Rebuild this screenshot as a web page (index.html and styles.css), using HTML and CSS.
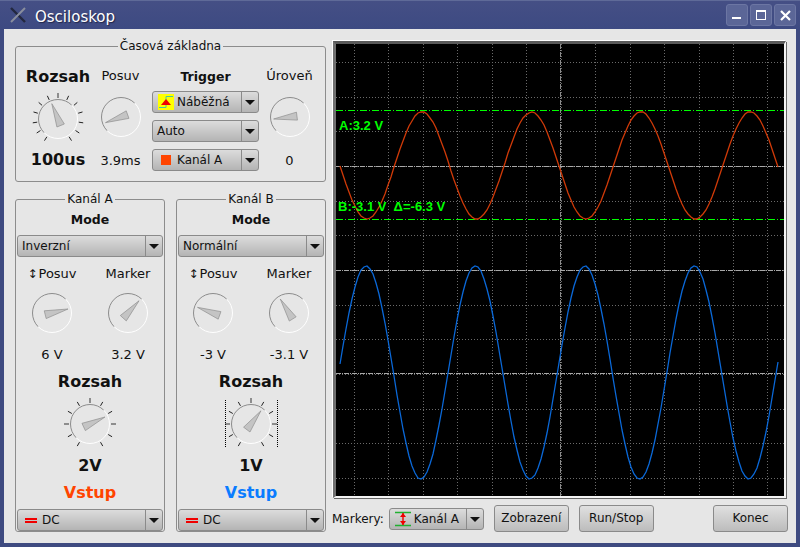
FILE: index.html
```html
<!DOCTYPE html>
<html lang="cs">
<head>
    <meta charset="UTF-8">
    <title>Osciloskop</title>
    <link rel="stylesheet" href="styles.css">
</head>
<body>
    <div class="window">
        <div class="titlebar">
            <svg class="app-icon" width="16" height="16" viewBox="0 0 16 16">
                <path d="M1 1 L15 15" stroke="#23283f" stroke-width="2.4"/>
                <path d="M15 1 L1 15" stroke="#8a8e9e" stroke-width="2"/>
            </svg>
            <span class="title">Osciloskop</span>
            <div class="win-buttons">
                <div class="win-btn">
                    <svg width="10" height="10" viewBox="0 0 10 10"><rect x="0" y="7" width="9" height="2" fill="#fff"/></svg>
                </div>
                <div class="win-btn">
                    <svg width="10" height="10" viewBox="0 0 10 10"><rect x="0.5" y="0.5" width="9" height="9" fill="none" stroke="#fff"/><rect x="0" y="0" width="10" height="2" fill="#fff"/></svg>
                </div>
                <div class="win-btn">
                    <svg width="11" height="11" viewBox="0 0 11 11"><path d="M1 1 L10 10 M10 1 L1 10" stroke="#fff" stroke-width="2.2"/></svg>
                </div>
            </div>
        </div>

        <div class="content">
            <div class="controls">
                <fieldset class="group timebase">
                    <legend>Časová základna</legend>
                    <div class="timebase-grid">
                        <div class="col">
                            <div class="big">Rozsah</div>
                            <svg class="knob" data-angle="-22" data-ticks="13" data-span="148" data-major="6"></svg>
                            <div class="big">100us</div>
                        </div>
                        <div class="col col-small">
                            <div class="label">Posuv</div>
                            <svg class="knob" data-angle="-110"></svg>
                            <div class="label">3.9ms</div>
                        </div>
                        <div class="col trigger">
                            <div class="head">Trigger</div>
                            <div class="combo">
                                <svg class="combo-icon" width="16" height="16" viewBox="0 0 16 16">
                                    <rect width="16" height="16" fill="#ffff00"/>
                                    <path d="M1 13.5 H8 V2.5 H15" fill="none" stroke="#44c8a0" stroke-width="1"/>
                                    <path d="M8 5 L13 11 H3 Z" fill="#f00000"/>
                                </svg>
                                <span class="combo-text">Náběžná</span>
                                <span class="combo-arrow"></span>
                            </div>
                            <div class="combo">
                                <span class="combo-text">Auto</span>
                                <span class="combo-arrow"></span>
                            </div>
                            <div class="combo">
                                <span class="swatch"></span>
                                <span class="combo-text">Kanál A</span>
                                <span class="combo-arrow"></span>
                            </div>
                        </div>
                        <div class="col col-small">
                            <div class="label">Úroveň</div>
                            <svg class="knob" data-angle="-97"></svg>
                            <div class="label">0</div>
                        </div>
                    </div>
                </fieldset>

                <div class="channels">
                    <fieldset class="group channel">
                        <legend>Kanál A</legend>
                        <div class="head mode">Mode</div>
                        <div class="combo combo-wide">
                            <span class="combo-text">Inverzní</span>
                            <span class="combo-arrow"></span>
                        </div>
                        <div class="pair pair-labels">
                            <div class="label"><span class="updown">↕</span>Posuv</div>
                            <div class="label">Marker</div>
                        </div>
                        <div class="pair pair-knobs">
                            <svg class="knob" data-angle="76"></svg>
                            <svg class="knob" data-angle="42"></svg>
                        </div>
                        <div class="pair pair-values">
                            <div class="label">6 V</div>
                            <div class="label">3.2 V</div>
                        </div>
                        <div class="big range">Rozsah</div>
                        <svg class="knob range-knob" data-angle="65" data-ticks="11" data-span="150" data-major="2,5,8"></svg>
                        <div class="big range-value">2V</div>
                        <div class="big vstup vstup-a">Vstup</div>
                        <div class="combo combo-wide combo-input">
                            <span class="dc-icon"></span>
                            <span class="combo-text">DC</span>
                            <span class="combo-arrow"></span>
                        </div>
                    </fieldset>

                    <fieldset class="group channel">
                        <legend>Kanál B</legend>
                        <div class="head mode">Mode</div>
                        <div class="combo combo-wide">
                            <span class="combo-text">Normální</span>
                            <span class="combo-arrow"></span>
                        </div>
                        <div class="pair pair-labels">
                            <div class="label"><span class="updown">↕</span>Posuv</div>
                            <div class="label">Marker</div>
                        </div>
                        <div class="pair pair-knobs">
                            <svg class="knob" data-angle="-70"></svg>
                            <svg class="knob" data-angle="-32"></svg>
                        </div>
                        <div class="pair pair-values">
                            <div class="label">-3 V</div>
                            <div class="label">-3.1 V</div>
                        </div>
                        <div class="big range">Rozsah</div>
                        <svg class="knob range-knob" data-angle="37" data-ticks="11" data-span="150" data-major="2,5,8" data-focus="1"></svg>
                        <div class="big range-value">1V</div>
                        <div class="big vstup vstup-b">Vstup</div>
                        <div class="combo combo-wide combo-input">
                            <span class="dc-icon"></span>
                            <span class="combo-text">DC</span>
                            <span class="combo-arrow"></span>
                        </div>
                    </fieldset>
                </div>
            </div>

            <div class="display">
                <div class="scope">
                    <svg id="plot" width="448" height="452" viewBox="0 0 448 452"></svg>
                    <span class="readout readout-a">A:3.2 V</span>
                    <span class="readout readout-b">B:-3.1 V  Δ=-6.3 V</span>
                </div>
                <div class="toolbar">
                    <span class="toolbar-label">Markery:</span>
                    <div class="combo combo-markers">
                        <svg class="combo-icon" width="16" height="16" viewBox="0 0 16 16">
                            <path d="M0 1.5 H16 M0 14.5 H16" stroke="#20b030" stroke-width="1.4"/>
                            <path d="M8 2 V14" stroke="#f00000" stroke-width="1.4"/>
                            <path d="M8 2 L11 6 H5 Z M8 14 L11 10 H5 Z" fill="#f00000"/>
                        </svg>
                        <span class="combo-text">Kanál A</span>
                        <span class="combo-arrow"></span>
                    </div>
                    <div class="btn">Zobrazení</div>
                    <div class="btn">Run/Stop</div>
                    <div class="btn btn-end">Konec</div>
                </div>
            </div>
        </div>
    </div>

    <script src="app.js"></script>
</body>
</html>
```

FILE: styles.css
```css
* {
    box-sizing: border-box;
}

body {
    margin: 0;
    font-family: "DejaVu Sans", sans-serif;
    font-size: 13px;
    color: #111;
    overflow: hidden;
}

.window {
    width: 800px;
    height: 547px;
    display: flex;
    flex-direction: column;
    background: #3e4a80;
    padding: 0 4px 4px;
    border-top: 1px solid #5f6a98;
}

.titlebar {
    height: 28px;
    display: flex;
    align-items: center;
    background: linear-gradient(#454f85, #3d4a82);
    margin: 0 -4px;
    padding: 0 4px 0 10px;
}

.app-icon {
    flex: none;
}

.title {
    margin: 4px 0 0 9px;
    color: #fff;
    font-size: 15px;
    text-shadow: 1px 1px 1px #20264a;
}

.win-buttons {
    margin-left: auto;
    display: flex;
    gap: 2px;
}

.win-btn {
    width: 22px;
    height: 22px;
    display: flex;
    align-items: center;
    justify-content: center;
    background: #5b6697;
    border: 1px solid #6c76a3;
    border-radius: 3px;
}

.content {
    flex: 1;
    display: flex;
    background: #e6e6e6;
    padding: 11px 8px 0 11px;
    gap: 6px;
}

.controls {
    width: 311px;
    display: flex;
    flex-direction: column;
    margin-top: -1px;
}

.group {
    margin: 0;
    padding: 0;
    border: 1px solid #8c8c8c;
    border-radius: 3px;
    min-width: 0;
}

.group legend {
    margin: 0 auto;
    padding: 0 2px;
    font-size: 12px;
    line-height: 14px;
}

.timebase {
    height: 143px;
}

.timebase-grid {
    display: grid;
    grid-template-columns: 84px 41px 118px 61px;
    padding-top: 12px;
}

.col {
    display: flex;
    flex-direction: column;
    align-items: center;
}

.col .big,
.col .label,
.col .head {
    height: 24px;
    line-height: 24px;
}

.col .knob {
    margin-bottom: -1px;
}

.col-small .label:first-child {
    height: 23px;
    line-height: 22px;
}

.col-small .knob {
    margin-top: -1px;
    margin-bottom: 2px;
}

.trigger {
    margin-left: 11px;
    width: 107px;
}

.trigger .combo {
    margin-bottom: 7px;
}

.trigger .head {
    margin-bottom: 2px;
}

.big {
    font-size: 16px;
    font-weight: bold;
    text-align: center;
    white-space: nowrap;
}

.label {
    text-align: center;
    white-space: nowrap;
}

.head {
    font-weight: bold;
    font-size: 12.5px;
    text-align: center;
}

.knob {
    width: 60px;
    height: 60px;
    flex: none;
    display: block;
}

.combo {
    height: 22px;
    display: flex;
    align-items: center;
    width: 107px;
    flex: none;
    font-size: 12px;
    background: linear-gradient(#dcdcdc, #b4b4b4);
    border: 1px solid #8a8a8a;
    border-radius: 3px;
    padding-left: 4px;
}

.combo-text {
    flex: 1;
    white-space: nowrap;
}

.combo-arrow {
    width: 17px;
    height: 100%;
    flex: none;
    border-left: 1px solid #8a8a8a;
    position: relative;
}

.combo-arrow::after {
    content: "";
    position: absolute;
    left: 3px;
    top: 8px;
    border-style: solid;
    border-width: 5px 5px 0;
    border-color: #111 transparent transparent;
}

.combo-icon {
    flex: none;
    margin: 0 3px 0 1px;
}

.swatch {
    width: 10px;
    height: 10px;
    flex: none;
    margin: 0 6px 0 4px;
    background: #ff4400;
}

.channels {
    display: flex;
    gap: 11px;
    margin-top: 10px;
}

.channel {
    width: 150px;
    height: 340px;
    display: block;
}

.mode {
    margin-top: 4px;
    line-height: 20px;
}

.combo-wide {
    width: 146px;
    margin: 5px 0 0 1px;
}

.pair {
    display: grid;
    grid-template-columns: 72px 72px;
    column-gap: 4px;
    justify-items: center;
}

.pair-labels {
    margin-top: 7px;
    line-height: 20px;
}

.pair-knobs {
    margin-top: -1px;
}

.pair-values {
    margin-top: 2px;
    line-height: 20px;
}

.updown {
    margin-right: 1px;
    font-size: 12px;
}

.range {
    margin-top: 7px;
    line-height: 20px;
}

.range-knob {
    margin: 2px auto 0;
}

.range-value {
    margin-top: 2px;
    line-height: 20px;
}

.vstup {
    margin-top: 7px;
    line-height: 20px;
}

.vstup-a {
    color: #ff4400;
}

.vstup-b {
    color: #0a7cff;
}

.combo-input {
    margin-top: 6px;
}

.dc-icon {
    width: 12px;
    height: 5px;
    flex: none;
    margin: 0 5px 0 3px;
    border-top: 2px solid #f00000;
    border-bottom: 2px solid #f00000;
}

.display {
    width: 456px;
    display: flex;
    flex-direction: column;
}

.scope {
    width: 453px;
    height: 457px;
    margin: 1px 1px 1px 1px;
    position: relative;
    background: #000;
    border-style: solid;
    border-width: 3px 2px 2px 3px;
    border-color: #5a5a5a #f4f4f4 #f4f4f4 #707070;
    box-shadow: -1px -1px 0 #fff, 1px 1px 0 #666;
}

#plot {
    display: block;
}

.readout {
    position: absolute;
    color: #00ff00;
    font-family: "Liberation Sans", sans-serif;
    font-weight: bold;
    font-size: 13px;
    line-height: 14px;
    white-space: pre;
}

.readout-a {
    left: 3px;
    top: 75px;
}

.readout-b {
    left: 2px;
    top: 156px;
}

.toolbar {
    display: flex;
    align-items: center;
    margin-top: 6px;
    height: 27px;
    font-size: 12px;
}

.toolbar-label {
    margin-right: 5px;
}

.combo-markers {
    width: 95px;
    margin-right: 10px;
}

.btn {
    width: 75px;
    height: 27px;
    line-height: 25px;
    text-align: center;
    background: linear-gradient(#e0e0e0, #bcbcbc);
    border: 1px solid #8a8a8a;
    border-radius: 3px;
    margin-right: 10px;
}

.btn-end {
    margin-left: auto;
    margin-right: 0;
}
```

FILE: app.js
```js
const SVG_NS = "http://www.w3.org/2000/svg";

function el(parent, tag, attrs) {
    const node = document.createElementNS(SVG_NS, tag);
    for (const [key, value] of Object.entries(attrs)) {
        node.setAttribute(key, value);
    }
    parent.appendChild(node);
    return node;
}

function polar(cx, cy, r, deg) {
    const rad = (deg * Math.PI) / 180;
    return [cx + r * Math.sin(rad), cy - r * Math.cos(rad)];
}

function drawKnob(svg) {
    const c = 30;
    const r = 19.5;
    const angle = Number(svg.dataset.angle);
    svg.setAttribute("viewBox", "0 0 60 60");

    // scale ticks
    const count = Number(svg.dataset.ticks || 0);
    const span = Number(svg.dataset.span || 0);
    const major = (svg.dataset.major || "").split(",").map(Number);
    for (let i = 0; i < count; i++) {
        const deg = -span + (i * 2 * span) / (count - 1);
        const isMajor = major.includes(i);
        const [x1, y1] = polar(c, c, 21, deg);
        const [x2, y2] = polar(c, c, isMajor ? 26 : 25.5, deg);
        el(svg, "line", {
            x1, y1, x2, y2,
            stroke: isMajor ? "#777" : "#222",
            "stroke-width": isMajor ? 1.6 : 1
        });
    }

    // dial, shaded from the top left
    const [ax, ay] = polar(c, c, r, 45);
    const [bx, by] = polar(c, c, r, 225);
    el(svg, "path", { d: `M${bx} ${by} A${r} ${r} 0 0 1 ${ax} ${ay}`, fill: "none", stroke: "#8c8c8c", "stroke-width": 1 });
    el(svg, "path", { d: `M${ax} ${ay} A${r} ${r} 0 0 1 ${bx} ${by}`, fill: "none", stroke: "#fff", "stroke-width": 1 });

    // pointer
    const tip = polar(c, c, 16.5, angle);
    const back = polar(c, c, -7, angle);
    const left = polar(back[0], back[1], 4, angle - 90);
    const right = polar(back[0], back[1], 4, angle + 90);
    el(svg, "polygon", {
        points: [tip, left, right].map(p => p.join(",")).join(" "),
        fill: "#c4c4c4",
        stroke: "#8e8e8e",
        "stroke-width": 0.7
    });

    if (svg.dataset.focus) {
        for (const x of [4.5, 56.5]) {
            el(svg, "line", { x1: x, y1: 5.5, x2: x, y2: 54, stroke: "#000", "stroke-dasharray": "1 1", "shape-rendering": "crispEdges" });
        }
    }
}

function drawPlot(svg) {
    const gridX = i => 18.5 + 34.45 * i;
    const gridY = i => 18.5 + 34.65 * i;
    const dotted = { stroke: "#6a6a6a", "stroke-dasharray": "1 2", "shape-rendering": "crispEdges" };
    const dashDot = { "stroke-dasharray": "7 2 1 2", "shape-rendering": "crispEdges" };
    const centreDash = { "stroke-dasharray": "5 1 1 1", "shape-rendering": "crispEdges" };

    for (let i = 0; i < 13; i++) {
        const x = Math.floor(gridX(i)) + 0.5;
        const y = Math.floor(gridY(i)) + 0.5;
        el(svg, "line", { x1: x, y1: 0, x2: x, y2: 452, ...dotted });
        el(svg, "line", { x1: 0, y1: y, x2: 448, y2: y, ...dotted });
    }

    // centre cross and channel zero lines
    el(svg, "line", { x1: 224.5, y1: 0, x2: 224.5, y2: 452, stroke: "#8c8c8c", ...centreDash });
    for (const y of [122.5, 226.5, 329.5]) {
        el(svg, "line", { x1: 0, y1: y, x2: 448, y2: y, stroke: "#a8a8a8", ...centreDash });
    }

    // markers
    for (const y of [66.5, 175.5]) {
        el(svg, "line", { x1: 0, y1: y, x2: 448, y2: y, stroke: "#00ff00", ...dashDot });
    }

    trace(svg, 121.5, 53.5, 86, "#d03a08");
    trace(svg, 328.5, 106.5, 30, "#0a68d8");
}

function trace(svg, centre, amp, peakX, color) {
    const period = 109.4;
    const points = [];
    for (let x = 4; x <= 442; x += 3) {
        const y = centre - amp * Math.cos((2 * Math.PI * (x - peakX)) / period);
        points.push(`${x},${Math.round(y)}`);
    }
    el(svg, "polyline", { points: points.join(" "), fill: "none", stroke: color, "stroke-width": 1.3 });
}

document.querySelectorAll(".knob").forEach(drawKnob);
drawPlot(document.getElementById("plot"));
```
